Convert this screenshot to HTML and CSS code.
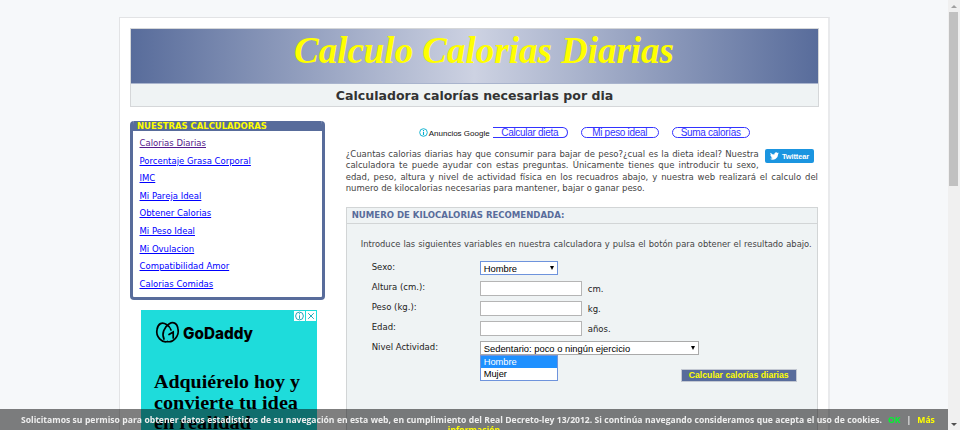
FILE: index.html
```
<!DOCTYPE html>
<html lang="es">
<head>
<meta charset="utf-8">
<title>Calculo Calorias Diarias</title>
<link rel="stylesheet" href="styles.css">
</head>
<body>
<div class="page">
  <header class="header">
    <h1 class="banner"><svg width="687" height="55" viewBox="0 0 687 55"><text class="banner-text" x="163" y="34" textLength="380" lengthAdjust="spacingAndGlyphs">Calculo Calorias Diarias</text></svg></h1>
    <h2 class="subtitle">Calculadora calorías necesarias por dia</h2>
  </header>
  <div class="columns">
    <aside class="side">
      <nav class="menu">
        <h3 class="menu-title">NUESTRAS CALCULADORAS</h3>
        <ul class="menu-list">
          <li><a class="visited" href="#">Calorias Diarias</a></li>
          <li><a href="#">Porcentaje Grasa Corporal</a></li>
          <li><a href="#">IMC</a></li>
          <li><a href="#">Mi Pareja Ideal</a></li>
          <li><a href="#">Obtener Calorias</a></li>
          <li><a href="#">Mi Peso Ideal</a></li>
          <li><a href="#">Mi Ovulacion</a></li>
          <li><a href="#">Compatibilidad Amor</a></li>
          <li><a href="#">Calorias Comidas</a></li>
        </ul>
      </nav>
      <div class="ad">
        <svg width="176" height="120" viewBox="0 0 176 120">
          <g fill="none" stroke="#000" stroke-width="1.7" stroke-linecap="round">
            <path d="M26.5 31.500C21 33 14.500 27 16 19.500C17 13.500 21 11.500 25.500 14.500C28 16 29.500 18 30 20"/>
            <path d="M26.500 31.500C32 33 38.500 26 37 19C36 12.500 32 11.500 28 14C23 17 20.500 24 23 29"/>
            <path d="M28 24.500L32.200 22V28"/>
          </g>
          <text class="ad-logo" x="42" y="29" textLength="70" lengthAdjust="spacingAndGlyphs">GoDaddy</text>
          <g class="ad-copy">
            <text x="13" y="78" textLength="146" lengthAdjust="spacingAndGlyphs">Adquiérelo hoy y</text>
            <text x="13" y="98.500" textLength="144" lengthAdjust="spacingAndGlyphs">convierte tu idea</text>
            <text x="13" y="119" textLength="97" lengthAdjust="spacingAndGlyphs">en realidad</text>
          </g>
          <path fill="#fff" d="M153 1h11v10h-11zM165 1h10v10h-10z"/>
          <g fill="none" stroke="#26a9bb" stroke-width="1">
            <circle cx="158.500" cy="6" r="3.900"/><path d="M158.500 3.200v1.100M158.500 5.300v3.500M167.200 3.200l5.600 5.600M172.800 3.200l-5.600 5.600"/>
          </g>
        </svg>
      </div>
    </aside>
    <main class="main">
      <div class="links">
        <svg class="info" width="9" height="9" viewBox="0 0 9 9"><circle cx="4.500" cy="4.500" r="3.800" fill="none" stroke="#00aecd" stroke-width=".9"/><path d="M4.500 1.900v1M4.500 3.700v3.300" stroke="#00aecd" stroke-width="1.100"/></svg>
        <span class="links-label">Anuncios Google</span>
        <a class="pill pill-open">Calcular dieta</a>
        <a class="pill">Mi peso ideal</a>
        <a class="pill">Suma calorías</a>
      </div>
      <div class="intro">
        <a class="tweet"><svg width="9" height="8" viewBox="0 0 24 20"><path fill="#fff" d="M24 2.400a10 10 0 0 1-2.800.8A5 5 0 0 0 23.300.5a10 10 0 0 1-3.100 1.200 4.900 4.900 0 0 0-8.400 4.500A14 14 0 0 1 1.700 1a4.900 4.900 0 0 0 1.500 6.600A5 5 0 0 1 1 7a4.900 4.900 0 0 0 3.900 4.900 5 5 0 0 1-2.200.1 4.900 4.900 0 0 0 4.600 3.400A9.900 9.900 0 0 1 0 17.500 14 14 0 0 0 21.500 5z"/></svg><span>Twittear</span></a>
        <p class="line short">¿Cuantas calorias diarias hay que consumir para bajar de peso?¿cual es la dieta ideal? Nuestra</p>
        <p class="line short">calculadora te puede ayudar con estas preguntas. Únicamente tienes que introducir tu sexo,</p>
        <p class="line">edad, peso, altura y nivel de actividad física en los recuadros abajo, y nuestra web realizará el calculo del</p>
        <p class="line last">numero de kilocalorias necesarias para mantener, bajar o ganar peso.</p>
      </div>
      <section class="calc">
        <h3 class="calc-title">NUMERO DE KILOCALORIAS RECOMENDADA:</h3>
        <p class="calc-intro">Introduce las siguientes variables en nuestra calculadora y pulsa el botón para obtener el resultado abajo.</p>
        <div class="form">
          <div class="row"><label>Sexo:</label><div class="select sex"><span>Hombre</span><i class="arrow"></i></div></div>
          <div class="row"><label>Altura (cm.):</label><div class="input"></div><span class="unit">cm.</span></div>
          <div class="row"><label>Peso (kg.):</label><div class="input"></div><span class="unit">kg.</span></div>
          <div class="row"><label>Edad:</label><div class="input"></div><span class="unit">años.</span></div>
          <div class="row"><label>Nivel Actividad:</label><div class="select level"><span>Sedentario: poco o ningún ejercicio</span><i class="arrow"></i></div>
            <div class="options"><div class="option on">Hombre</div><div class="option">Mujer</div></div>
          </div>
          <div class="submit">Calcular calorías diarias</div>
        </div>
      </section>
    </main>
  </div>
</div>
<div class="cookies">
  <div class="cookie-line"><span class="cookie-text">Solicitamos su permiso para obtener datos estadísticos de su navegación en esta web, en cumplimiento del Real Decreto-ley 13/2012. Si continúa navegando consideramos que acepta el uso de cookies.</span><a class="ok">OK</a><span>|</span><a class="more">Más</a></div>
  <a class="more">información</a>
</div>
<div class="scrollbar"><i class="up"></i><div class="thumb"></div><i class="down"></i></div>
</body>
</html>
```
FILE: styles.css
```
* { box-sizing: border-box; }
html, body { height: 430px; overflow: hidden; }
body { margin: 0; padding-top: 17px; background: #f6f8fa; font-family: "DejaVu Sans", sans-serif; font-size: 8.5px; color: #444; }
h1, h2, h3, p, ul { margin: 0; padding: 0; }
svg { display: block; }

.page { width: 711px; height: 413px; overflow: hidden; margin-left: 119px; padding: 10px; background: #fff; border: 1px solid #e2e3e5; border-right: 2px solid #e9eaec; border-bottom: 0; }
.header { width: 689px; height: 79px; border: 1px solid #d5d7d9; background: #eff3f4; }
.banner { height: 55px; background: linear-gradient(90deg, #586c9b 0%, #cdd2e2 50%, #586c9b 100%); border-bottom: 1px solid #a9b4cd; }
.banner-text { font-family: "Liberation Serif", serif; font-style: italic; font-weight: bold; font-size: 38px; fill: #ff0; }
.subtitle { height: 22px; line-height: 23px; text-align: center; font-size: 12.55px; color: #333; }

.columns { display: flex; padding-top: 14px; }
.side { width: 195px; margin-right: 21px; }
.menu { height: 179px; border: 3px solid #586c9b; border-top: 0; border-radius: 4px; background: #fff; overflow: hidden; }
.menu-title { height: 10px; padding-left: 4px; line-height: 11px; background: #586c9b; color: #ff0; font-size: 8.45px; white-space: nowrap; }
.menu-list { list-style: none; padding: 3px 0 0 6.500px; }
.menu-list li { height: 17.6px; line-height: 18px; white-space: nowrap; }
.menu-list a { color: #00f; }
.menu-list .visited { color: #551a8b; }
.ad { width: 176px; height: 120px; margin: 10px 0 0 11px; background: #1edcdb; }
.ad-logo { font-family: Inter, sans-serif; font-weight: 800; font-size: 16px; }
.ad-copy { font-family: "Liberation Serif", serif; font-weight: bold; font-size: 19.5px; }

.main { width: 473px; }
.links { display: flex; align-items: center; height: 11px; margin: 6px 0 0 73px; font-family: "Liberation Sans", sans-serif; white-space: nowrap; }
.links-label { width: 64px; margin: 2px 0 0 1px; font-size: 8px; color: #111; }
.pill { width: 78px; height: 11px; margin-right: 13px; border: 1px solid #33f; border-radius: 6px; line-height: 9px; text-align: center; font-size: 10px; letter-spacing: -.3px; color: #33f; }
.pill-open { width: 75px; border-left: 0; border-radius: 0 6px 6px 0; }
.intro { margin-top: 10px; height: 47px; }
.tweet { float: right; display: flex; align-items: center; gap: 3px; width: 49px; height: 14px; margin: 1px 4px 0 0; padding-left: 5px; border-radius: 2px; background: #1b95e0; color: #fff; font: bold 7.400px "Liberation Sans", sans-serif; letter-spacing: -.1px; }
.line { height: 11.4px; line-height: 13px; white-space: nowrap; text-align: justify; text-align-last: justify; }
.line.short { width: 413px; }
.line.last { width: 297px; }
.calc { height: 260px; margin-top: 12px; border: 1px solid #d2d5d6; background: #eff3f4; }
.calc-title { height: 16px; padding-left: 5px; line-height: 15px; border-bottom: 1px solid #d2d5d6; font-size: 8.55px; color: #586c9b; }
.calc-intro { width: 451px; height: 12px; margin: 15px 0 0 14px; line-height: 11px; font-size: 8.35px; white-space: nowrap; text-align-last: justify; }
.form { padding: 10px 0 0 25px; color: #222; }
.row { position: relative; display: flex; align-items: flex-start; height: 20px; }
.row label { width: 108px; line-height: 12px; }
.select { display: flex; justify-content: space-between; align-items: center; height: 14px; padding: 0 3px; border: 1px solid #aaa; background: #fff; font: 9.4px "Liberation Sans", sans-serif; color: #000; white-space: nowrap; }
.sex { width: 78px; border-color: #6e93dc; }
.level { width: 219px; }
.arrow { border: 2.500px solid transparent; border-top: 4px solid #000; border-bottom: 0; }
.input { width: 102px; height: 15px; border: 1px solid #b5b5b5; background: #fff; }
.unit { margin: 2px 0 0 6px; line-height: 12px; }
.options { position: absolute; left: 108px; top: 14px; width: 78px; height: 26px; border: 1px solid #6e93dc; background: #fff; font: 9.3px/12px "Liberation Sans", sans-serif; color: #000; }
.option { height: 12px; padding-left: 3px; }
.option.on { background: #1e90ff; color: #fff; }
.submit { width: 116px; height: 13px; margin: 8px 0 0 309px; border: 1px solid #c3c8d2; background: #586c9b; color: #ff0; font: bold 8.700px/11px "Liberation Sans", sans-serif; text-align: center; white-space: nowrap; }

.cookies { position: fixed; left: 0; top: 409px; width: 948px; height: 21px; padding-top: 6px; background: rgba(0,0,0,.5); color: #eee; font-weight: bold; font-family: "Open Sans", sans-serif; font-size: 8.6px; text-align: center; line-height: 11px; }
.cookie-line { display: flex; gap: 6px; padding-left: 21px; height: 10px; white-space: nowrap; }
.cookie-text { width: 861px; flex: none; font-size: 8.58px; text-align-last: justify; }
.ok { color: #00f530; }
.more { color: #ff0; }
.scrollbar { position: fixed; right: 0; top: 0; width: 12px; height: 430px; padding: 5px 2px 4px 1px; display: flex; flex-direction: column; align-items: center; background: #f0f0f0; }
.thumb { width: 9px; height: 174px; margin: 4px 0 auto; background: #c1c1c1; }
.up, .down { border: 3px solid transparent; }
.up { border-top: 0; border-bottom: 3px solid #a0a0a0; }
.down { border-bottom: 0; border-top: 3px solid #505050; }
```
